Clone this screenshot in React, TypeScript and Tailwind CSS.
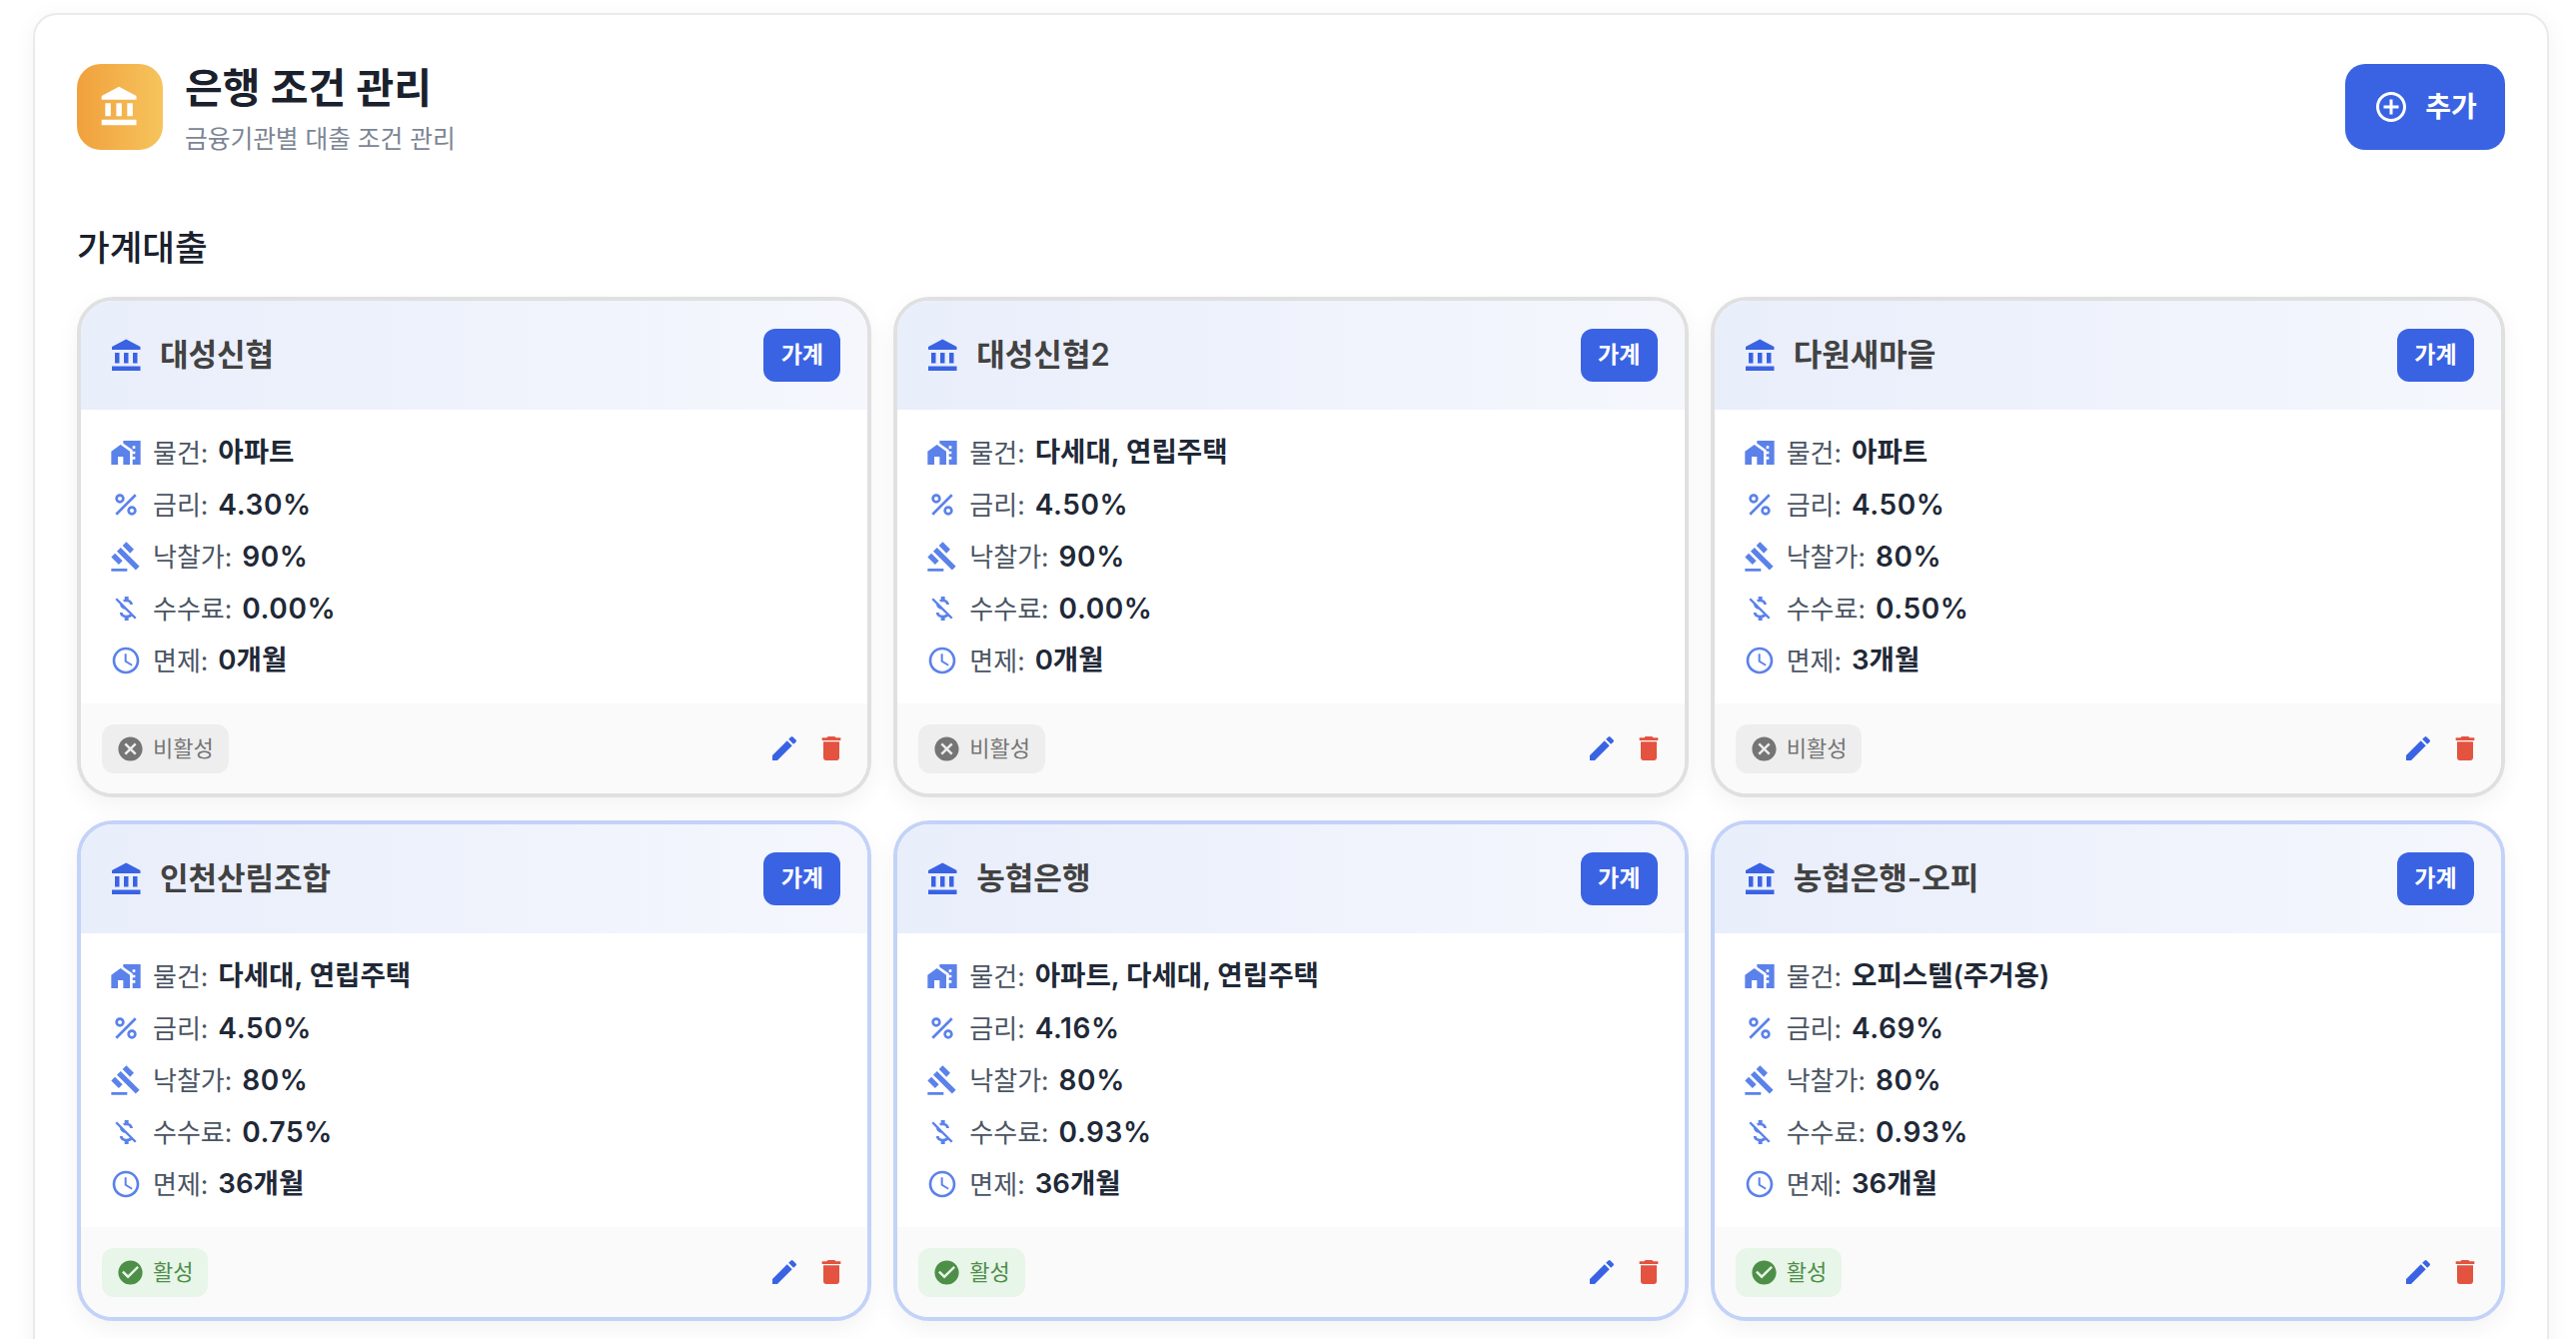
const ICONS = {
  bank: "M4 10v7h3v-7H4zm6 0v7h3v-7h-3zM2 22h19v-3H2v3zm14-12v7h3v-7h-3zm-4.5-9L2 6v2h19V6l-9.5-5z",
  homeWork: "M1 11v10h5v-6h4v6h5V11L8 6z M10 3v1.97l7 5.03V11h2v2h-2v2h2v2h-2v4h6V3H10zm9 6h-2V7h2v2z",
  percent: "M7.5 11C9.43 11 11 9.43 11 7.5S9.43 4 7.5 4 4 5.57 4 7.5 5.57 11 7.5 11zm0-5C8.33 6 9 6.67 9 7.5S8.33 9 7.5 9 6 8.33 6 7.5 6.67 6 7.5 6zM4.0025 18.5832 18.59 3.9955l1.4142 1.4142L5.4167 19.9974zM16.5 13c-1.93 0-3.5 1.57-3.5 3.5s1.57 3.5 3.5 3.5 3.5-1.57 3.5-3.5-1.57-3.5-3.5-3.5zm0 5c-.83 0-1.5-.67-1.5-1.5s.67-1.5 1.5-1.5 1.5.67 1.5 1.5-.67 1.5-1.5 1.5z",
  gavel: "M1 21h12v2H1zM5.245 8.07l2.83-2.827 14.14 14.142-2.828 2.828zM12.317 1l5.657 5.656-2.83 2.83-5.654-5.66zM3.825 9.485l5.657 5.657-2.828 2.828-5.657-5.657z",
  moneyOff: "M12.5 6.9c1.78 0 2.44.85 2.5 2.1h2.21c-.07-1.72-1.12-3.3-3.21-3.81V3h-3v2.16c-.53.12-1.03.3-1.48.54l1.47 1.47c.41-.17.91-.27 1.51-.27zM5.33 4.06 4.06 5.33 7.5 8.77c0 2.08 1.56 3.21 3.91 3.91l3.51 3.51c-.34.48-1.05.91-2.42.91-2.06 0-2.87-.92-2.98-2.1h-2.2c.12 2.19 1.76 3.42 3.68 3.83V21h3v-2.15c.96-.18 1.82-.55 2.45-1.12l2.22 2.22 1.27-1.27L5.33 4.06z",
  clock: "M11.99 2C6.47 2 2 6.48 2 12s4.47 10 9.99 10C17.52 22 22 17.52 22 12S17.52 2 11.99 2zM12 20c-4.42 0-8-3.58-8-8s3.58-8 8-8 8 3.58 8 8-3.58 8-8 8z M12.5 7H11v6l5.25 3.15.75-1.23-4.5-2.67z",
  edit: "M3 17.25V21h3.75L17.81 9.94l-3.75-3.75L3 17.25zM20.71 7.04c.39-.39.39-1.02 0-1.41l-2.34-2.34a.9959.9959 0 0 0-1.41 0l-1.83 1.83 3.75 3.75 1.83-1.83z",
  trash: "M6 19c0 1.1.9 2 2 2h8c1.1 0 2-.9 2-2V7H6v12zM19 4h-3.5l-1-1h-5l-1 1H5v2h14V4z",
  cancel: "M12 2C6.47 2 2 6.47 2 12s4.47 10 10 10 10-4.47 10-10S17.53 2 12 2zm5 13.59L15.59 17 12 13.41 8.41 17 7 15.59 10.59 12 7 8.41 8.41 7 12 10.59 15.59 7 17 8.41 13.41 12 17 15.59z",
  check: "M12 2C6.48 2 2 6.48 2 12s4.48 10 10 10 10-4.48 10-10S17.52 2 12 2zm-2 15-5-5 1.41-1.41L10 14.17l7.59-7.59L19 8l-9 9z",
  add: "M13 7h-2v4H7v2h4v4h2v-4h4v-2h-4V7zm-1-5C6.48 2 2 6.48 2 12s4.48 10 10 10 10-4.48 10-10S17.52 2 12 2zm0 18c-4.41 0-8-3.59-8-8s3.59-8 8-8 8 3.59 8 8-3.59 8-8 8z",
}

function Icon({ d, className }: { d: string; className: string }) {
  return (
    <svg viewBox="0 0 24 24" fill="currentColor" className={className}>
      <path d={d} />
    </svg>
  )
}

interface Loan {
  name: string
  property: string
  rate: string
  bid: string
  fee: string
  exempt: string
  active: boolean
}

const loans: Loan[] = [
  { name: "대성신협", property: "아파트", rate: "4.30%", bid: "90%", fee: "0.00%", exempt: "0개월", active: false },
  { name: "대성신협2", property: "다세대, 연립주택", rate: "4.50%", bid: "90%", fee: "0.00%", exempt: "0개월", active: false },
  { name: "다원새마을", property: "아파트", rate: "4.50%", bid: "80%", fee: "0.50%", exempt: "3개월", active: false },
  { name: "인천산림조합", property: "다세대, 연립주택", rate: "4.50%", bid: "80%", fee: "0.75%", exempt: "36개월", active: true },
  { name: "농협은행", property: "아파트, 다세대, 연립주택", rate: "4.16%", bid: "80%", fee: "0.93%", exempt: "36개월", active: true },
  { name: "농협은행-오피", property: "오피스텔(주거용)", rate: "4.69%", bid: "80%", fee: "0.93%", exempt: "36개월", active: true },
]

function InfoRow({ icon, label, value, numeric }: { icon: string; label: string; value: string; numeric?: boolean }) {
  return (
    <div className="flex h-[52px] items-center">
      <Icon d={icon} className="h-8 w-8 shrink-0 text-[#5b82ea]" />
      <span className="ml-[11px] text-[26px] text-[#4b5563]">{label}:</span>
      <span className={`ml-[10px] font-semibold text-[#1f2937] ${numeric ? "text-[28px] tracking-[0.6px]" : "text-[27.6px]"}`}>
        {value}
      </span>
    </div>
  )
}

function LoanCard({ loan }: { loan: Loan }) {
  return (
    <div
      className={`flex h-[501px] flex-col overflow-hidden rounded-[36px] border-4 bg-white shadow-[0_8px_24px_rgba(0,0,0,0.05)] ${
        loan.active ? "border-[#c3d2f8]" : "border-[#e0e0e0]"
      }`}
    >
      <div className="flex h-[109px] shrink-0 items-center justify-between bg-linear-to-r from-[#e9eefb] to-[#f5f7fd] pl-7 pr-[27px]">
        <div className="flex items-center gap-[15px]">
          <Icon d={ICONS.bank} className="h-9 w-9 text-[#3a63e4]" />
          <span className="text-[31px] font-semibold text-[#424242]">{loan.name}</span>
        </div>
        <span className="flex h-[53px] w-[77px] items-center justify-center rounded-xl bg-[#3a63e4] text-[23px] font-bold text-white">
          가계
        </span>
      </div>
      <div className="flex-1 px-[29px] pt-[17px]">
        <InfoRow icon={ICONS.homeWork} label="물건" value={loan.property} />
        <InfoRow icon={ICONS.percent} label="금리" value={loan.rate} numeric />
        <InfoRow icon={ICONS.gavel} label="낙찰가" value={loan.bid} numeric />
        <InfoRow icon={ICONS.moneyOff} label="수수료" value={loan.fee} numeric />
        <InfoRow icon={ICONS.clock} label="면제" value={loan.exempt} />
      </div>
      <div className="flex h-[90px] shrink-0 items-center justify-between bg-[#fafafa] pl-[21px] pr-5">
        {loan.active ? (
          <span className="flex h-[49px] items-center gap-2 rounded-xl bg-[#e8f5e9] pl-[14px] pr-[15px] text-[22px] text-[#4e8f48]">
            <Icon d={ICONS.check} className="h-[29px] w-[29px]" />
            활성
          </span>
        ) : (
          <span className="flex h-[49px] items-center gap-2 rounded-xl bg-[#eeeeee] pl-[14px] pr-[15px] text-[22px] text-[#757575]">
            <Icon d={ICONS.cancel} className="h-[29px] w-[29px]" />
            비활성
          </span>
        )}
        <div className="flex items-center gap-[15px]">
          <Icon d={ICONS.edit} className="h-8 w-8 text-[#3a63e4]" />
          <Icon d={ICONS.trash} className="h-8 w-8 text-[#e35340]" />
        </div>
      </div>
    </div>
  )
}

export default function App() {
  return (
    <div className="h-[1340px] overflow-hidden bg-white pl-[33px] pr-[27px] pt-[13px] font-['Inter','Noto_Sans_CJK_KR',sans-serif]">
      <div className="min-h-[1400px] rounded-3xl border-2 border-[#e8eaee] bg-white pl-[42px] pr-[42px] pt-[49px] shadow-[0_4px_24px_rgba(0,0,0,0.05)]">
        <div className="flex items-center justify-between">
          <div className="flex items-center gap-[22px]">
            <div className="flex h-[86px] w-[86px] items-center justify-center rounded-3xl bg-linear-to-r from-[#f0a03c] to-[#f6c45c]">
              <Icon d={ICONS.bank} className="h-11 w-11 text-white" />
            </div>
            <div>
              <h1 className="text-[41px] leading-[48px] font-semibold text-[#1a202c]">은행 조건 관리</h1>
              <p className="mt-[16px] text-[24.7px] leading-[22px] text-[#7c8594]">금융기관별 대출 조건 관리</p>
            </div>
          </div>
          <button className="flex h-[86px] w-[160px] items-center justify-center gap-4 rounded-[20px] bg-[#3a63e4] text-[28px] font-bold text-white">
            <Icon d={ICONS.add} className="h-9 w-9" />
            추가
          </button>
        </div>
        <h2 className="mt-[73px] text-[35.5px] leading-[52px] font-medium text-[#1a202c]">가계대출</h2>
        <div className="mt-[22px] grid grid-cols-3 gap-x-[22px] gap-y-[23px]">
          {loans.map((loan) => (
            <LoanCard key={loan.name} loan={loan} />
          ))}
        </div>
      </div>
    </div>
  )
}
